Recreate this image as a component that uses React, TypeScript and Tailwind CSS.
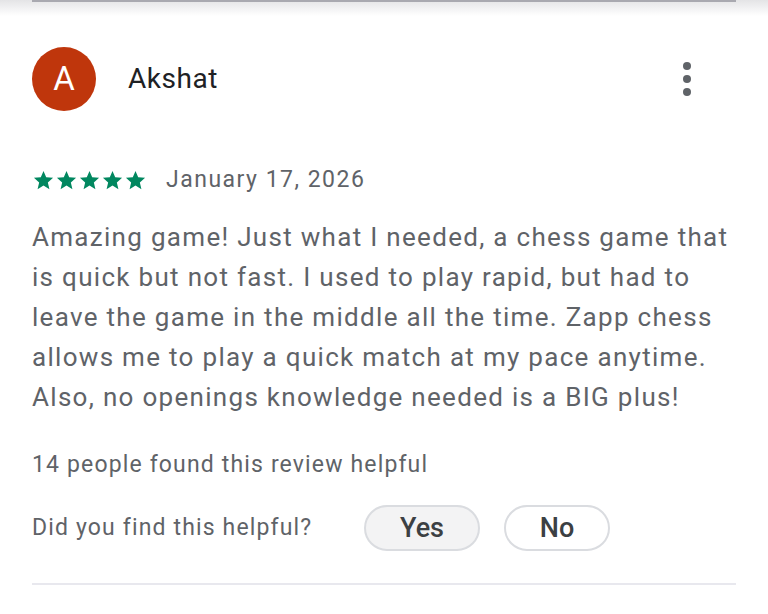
import React from 'react';

const Star: React.FC = () => (
  <svg viewBox="0 0 24 24" className="h-[23px] w-[23px] fill-[#01875f]">
    <path d="M12 17.27 18.18 21l-1.64-7.03L22 9.24l-7.19-.61L12 2 9.19 8.63 2 9.24l5.46 4.73L5.82 21z" />
  </svg>
);

const review =
  'Amazing game! Just what I needed, a chess game that is quick but not fast. I used to play rapid, but had to leave the game in the middle all the time. Zapp chess allows me to play a quick match at my pace anytime. Also, no openings knowledge needed is a BIG plus!';

export default function App() {
  return (
    <div className="relative h-[614px] w-[768px] overflow-hidden bg-white font-['Roboto',sans-serif]">
      {/* top edge shadow */}
      <div className="absolute inset-x-0 top-0 h-4 bg-gradient-to-b from-[#e4e4e6] to-white" />
      <div className="absolute left-8 right-8 top-0 h-[2px] bg-[#a9a9b0]" />

      <div className="relative px-8 pt-[47px]">
        <div className="flex items-center">
          <div className="flex h-16 w-16 items-center justify-center rounded-full bg-[#bf360c] text-[33px] text-white">
            A
          </div>
          <div className="ml-8 text-[28px] tracking-[0.02em] text-[#202124]">Akshat</div>
          <button className="ml-auto mr-[29px] flex h-10 w-10 flex-col items-center justify-center gap-[5px]">
            <span className="h-[8px] w-[8px] rounded-full bg-[#5f6368]" />
            <span className="h-[8px] w-[8px] rounded-full bg-[#5f6368]" />
            <span className="h-[8px] w-[8px] rounded-full bg-[#5f6368]" />
          </button>
        </div>

        <div className="mt-[53px] flex items-center">
          <div className="flex">
            <Star />
            <Star />
            <Star />
            <Star />
            <Star />
          </div>
          <span className="ml-[19px] text-[23px] leading-[32px] tracking-[0.065em] text-[#5f6368]">January 17, 2026</span>
        </div>

        <p className="mt-[21px] text-[26px] leading-[40px] tracking-[0.05em] text-[#5f6368]">{review}</p>

        <div className="mt-[32px] text-[23px] leading-[32px] tracking-[0.05em] text-[#5f6368]">
          14 people found this review helpful
        </div>

        <div className="mt-[24px] flex items-center">
          <span className="w-[332px] text-[23px] leading-[32px] tracking-[0.05em] text-[#5f6368]">Did you find this helpful?</span>
          <button className="h-[46px] w-[116px] rounded-full border-2 border-[#dadce0] bg-[#f3f3f4] text-[27px] font-medium text-[#3c4043]">
            Yes
          </button>
          <button className="ml-6 h-[46px] w-[106px] rounded-full border-2 border-[#dadce0] bg-white text-[27px] font-medium text-[#3c4043]">
            No
          </button>
        </div>

        <div className="mt-[32px] h-[2px] bg-[#e8e8ee]" />
      </div>
    </div>
  );
}
